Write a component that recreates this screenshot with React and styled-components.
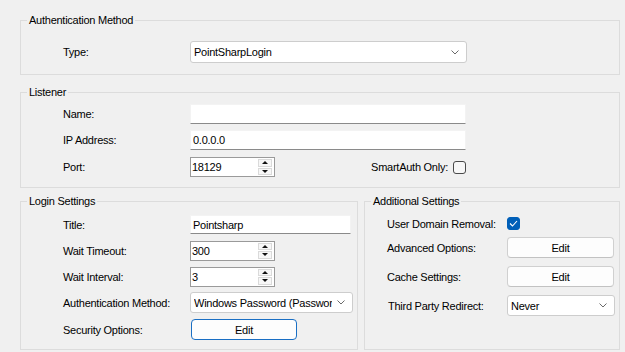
import React from "react";
import styled, { createGlobalStyle } from "styled-components";

const Global = createGlobalStyle`
  body {
    margin: 0;
    background: #f0f0f0;
    font-family: "Liberation Sans", Arial, sans-serif;
    font-size: 11px;
    letter-spacing: -0.25px;
    color: #000;
  }
`;

const Page = styled.div`
  width: 625px;
  height: 352px;
  box-sizing: border-box;
  padding: 13px 5px 0 20px;
  display: flex;
  flex-direction: column;
`;

const Columns = styled.div`
  display: flex;
  gap: 6px;
  margin-top: 6px;
`;

const Group = styled.fieldset`
  margin: ${(p) => p.$mt || 0}px 0 0;
  padding: 0;
  border: 1px solid #dcdcdc;
  min-width: 0;
  width: ${(p) => (p.$w ? `${p.$w}px` : "auto")};
  box-sizing: border-box;
`;

const Legend = styled.legend`
  margin-left: 6px;
  padding: 0 2px;
  line-height: 14px;
  font-size: 11px;
`;

const Body = styled.div`
  display: flex;
  flex-direction: column;
  padding: ${(p) => p.$pad};
`;

const Row = styled.div`
  display: flex;
  align-items: center;
  height: ${(p) => p.$h || 20}px;
  margin-top: ${(p) => p.$mt || 0}px;
  width: ${(p) => (p.$w ? `${p.$w}px` : "auto")};
`;

const Label = styled.span`
  width: ${(p) => p.$w}px;
  padding-left: ${(p) => p.$pl || 0}px;
  box-sizing: border-box;
  flex-shrink: 0;
  white-space: nowrap;
`;

const Spacer = styled.div`
  flex: 1;
`;

const TextBox = styled.input`
  width: ${(p) => p.$w}px;
  height: ${(p) => p.$h || 20}px;
  box-sizing: border-box;
  margin: 0;
  padding: 0 2px;
  border: 1px solid #f3f3f3;
  border-bottom-color: #8a8a8a;
  background: #fff;
  font: inherit;
  letter-spacing: inherit;
  color: #000;
  outline: none;
`;

const Spin = styled.div`
  width: ${(p) => p.$w}px;
  height: ${(p) => p.$h || 20}px;
  box-sizing: border-box;
  border: 1px solid #9a9a9a;
  background: #fff;
  display: flex;
  align-items: center;
  padding: 1px 2px 1px 1px;
`;

const SpinValue = styled.span`
  flex: 1;
`;

const SpinButtons = styled.div`
  display: flex;
  flex-direction: column;
  width: 14px;
  height: 100%;
  gap: 1px;
`;

const SpinButton = styled.div`
  flex: 1;
  border: 1px solid #dadada;
  background: #f7f7f7;
  display: flex;
  align-items: center;
  justify-content: center;
  &::after {
    content: "";
    border-left: 3px solid transparent;
    border-right: 3px solid transparent;
    ${(p) =>
      p.$up ? "border-bottom: 3px solid #111;" : "border-top: 3px solid #111;"}
  }
`;

const Combo = styled.div`
  width: ${(p) => p.$w}px;
  height: ${(p) => p.$h || 21}px;
  box-sizing: border-box;
  border: 1px solid #cdcdcd;
  border-radius: 3px;
  background: #fff;
  display: flex;
  align-items: center;
  padding: 0 7px 0 3px;
  gap: 5px;
`;

const ComboText = styled.span`
  flex: 1;
  overflow: hidden;
  white-space: nowrap;
`;

const Button = styled.button`
  width: ${(p) => p.$w}px;
  height: ${(p) => p.$h || 21}px;
  box-sizing: border-box;
  margin: 0;
  padding: 0;
  border: 1px solid ${(p) => (p.$focused ? "#1a6fc4" : "#d0d0d0")};
  border-bottom-color: ${(p) => (p.$focused ? "#1a6fc4" : "#c2c2c2")};
  border-radius: 4px;
  background: #fdfdfd;
  font: inherit;
  letter-spacing: inherit;
  color: #000;
`;

const Check = styled.span`
  width: 13px;
  height: 13px;
  box-sizing: border-box;
  border-radius: 3px;
  border: 1px solid ${(p) => (p.$checked ? "#005fb8" : "#4a4a4a")};
  background: ${(p) => (p.$checked ? "#005fb8" : "#f7f7f7")};
  display: inline-flex;
  align-items: center;
  justify-content: center;
  margin-left: ${(p) => p.$ml || 0}px;
`;

const Chevron = () => (
  <svg width="8" height="5" viewBox="0 0 8 5">
    <polyline points="0.5,0.5 4,4 7.5,0.5" fill="none" stroke="#6a6a6a" strokeWidth="1" />
  </svg>
);

const Tick = () => (
  <svg width="9" height="7" viewBox="0 0 9 7">
    <polyline points="1,3.5 3.5,6 8,1" fill="none" stroke="#fff" strokeWidth="1.1" />
  </svg>
);

const SpinBox = ({ value, w }) => (
  <Spin $w={w}>
    <SpinValue>{value}</SpinValue>
    <SpinButtons>
      <SpinButton $up />
      <SpinButton />
    </SpinButtons>
  </Spin>
);

export default function App() {
  return (
    <>
      <Global />
      <Page>
        <Group>
          <Legend>Authentication Method</Legend>
          <Body $pad="14px 0 11px 42px">
            <Row $h={22}>
              <Label $w={127}>Type:</Label>
              <Combo $w={277} $h={22}>
                <ComboText>PointSharpLogin</ComboText>
                <Chevron />
              </Combo>
            </Row>
          </Body>
        </Group>

        <Group $mt={10}>
          <Legend>Listener</Legend>
          <Body $pad="5px 0 10px 42px">
            <Row>
              <Label $w={127}>Name:</Label>
              <TextBox $w={276} defaultValue="" />
            </Row>
            <Row $mt={6}>
              <Label $w={127}>IP Address:</Label>
              <TextBox $w={276} defaultValue="0.0.0.0" />
            </Row>
            <Row $mt={7} $w={403}>
              <Label $w={127}>Port:</Label>
              <SpinBox w={85} value="18129" />
              <Spacer />
              <span>SmartAuth Only:</span>
              <Check $ml={5} />
            </Row>
          </Body>
        </Group>

        <Columns>
          <Group $w={338}>
            <Legend>Login Settings</Legend>
            <Body $pad="6px 0 9px 42px">
              <Row $h={21}>
                <Label $w={127}>Title:</Label>
                <TextBox $w={161} $h={19} defaultValue="Pointsharp" />
              </Row>
              <Row $h={21} $mt={5}>
                <Label $w={127}>Wait Timeout:</Label>
                <SpinBox w={85} value="300" />
              </Row>
              <Row $h={21} $mt={5}>
                <Label $w={127}>Wait Interval:</Label>
                <SpinBox w={85} value="3" />
              </Row>
              <Row $h={21} $mt={5}>
                <Label $w={127}>Authentication Method:</Label>
                <Combo $w={163}>
                  <ComboText>Windows Password (Password)</ComboText>
                  <Chevron />
                </Combo>
              </Row>
              <Row $h={21} $mt={6}>
                <Label $w={128}>Security Options:</Label>
                <Button $w={106} $focused>
                  Edit
                </Button>
              </Row>
            </Body>
          </Group>

          <Group $w={256}>
            <Legend>Additional Settings</Legend>
            <Body $pad="5px 0 9px 22px">
              <Row $h={21}>
                <Label $w={120}>User Domain Removal:</Label>
                <Check $checked>
                  <Tick />
                </Check>
              </Row>
              <Row $h={21} $mt={3}>
                <Label $w={120}>Advanced Options:</Label>
                <Button $w={107}>Edit</Button>
              </Row>
              <Row $h={21} $mt={8}>
                <Label $w={120}>Cache Settings:</Label>
                <Button $w={107}>Edit</Button>
              </Row>
              <Row $h={21} $mt={8}>
                <Label $w={120} $pl={1}>Third Party Redirect:</Label>
                <Combo $w={108}>
                  <ComboText>Never</ComboText>
                  <Chevron />
                </Combo>
              </Row>
            </Body>
          </Group>
        </Columns>
      </Page>
    </>
  );
}
